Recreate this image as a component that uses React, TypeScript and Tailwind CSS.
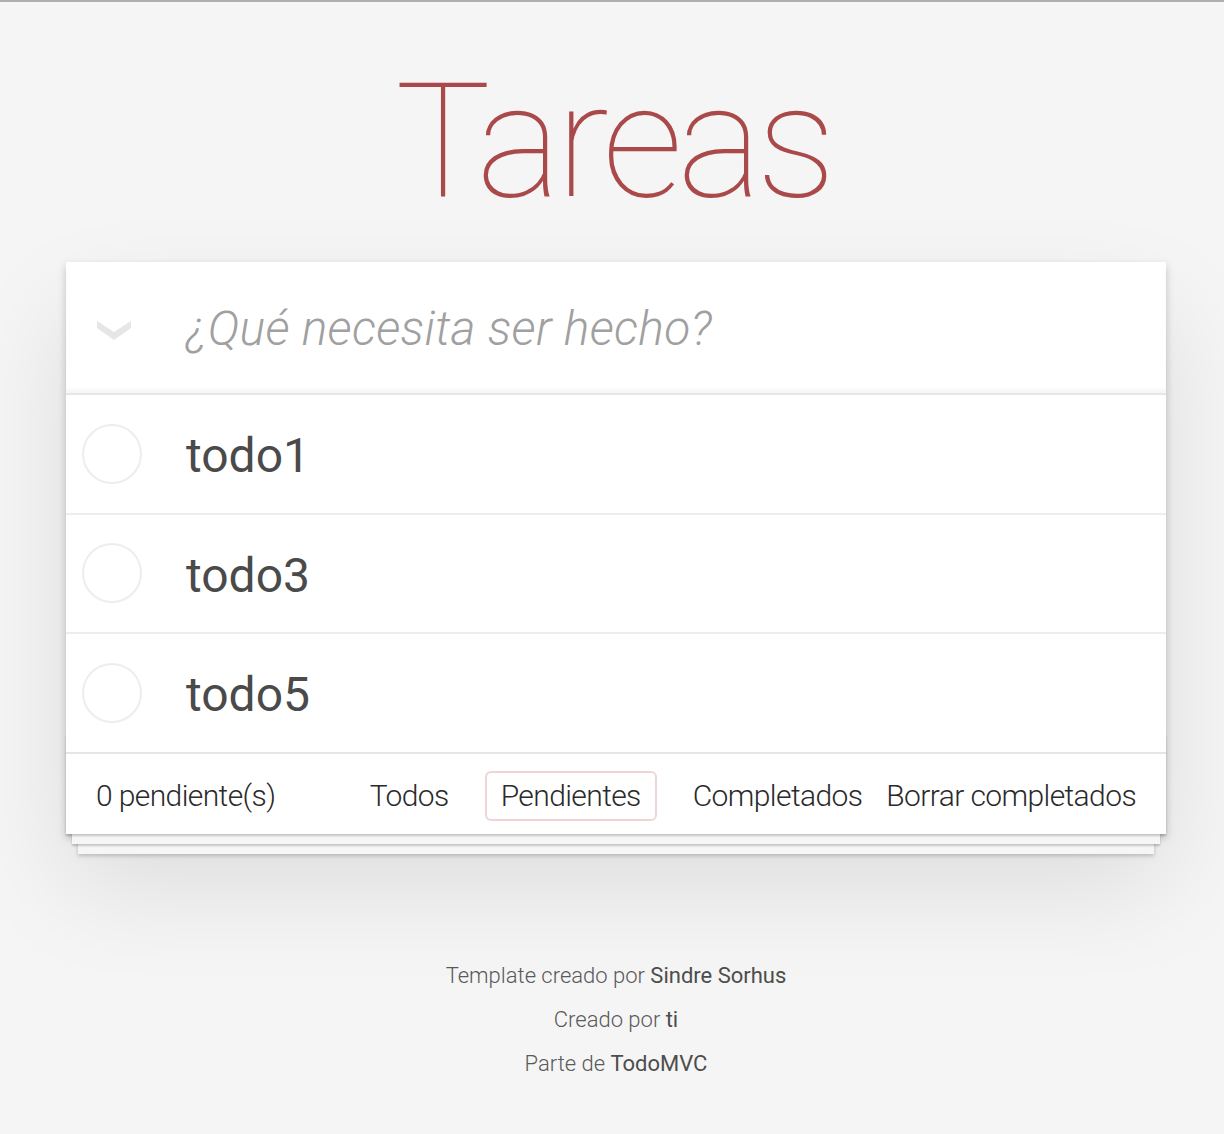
import React from "react";

const todos = ["todo1", "todo3", "todo5"];

function Circle() {
  return (
    <svg width="60" height="60" viewBox="0 0 60 60" className="block shrink-0">
      <circle cx="30" cy="30" r="29" fill="none" stroke="#ededed" strokeWidth="2" />
    </svg>
  );
}

function Chevron() {
  return (
    <svg width="34" height="20" viewBox="0 0 34 20" className="block">
      <polygon points="0,1 17,12 34,1 34,8 17,20 0,8" fill="#e6e6e6" />
    </svg>
  );
}

export default function App() {
  return (
    <div
      className="min-h-[1134px] bg-[#f5f5f5] border-t-2 border-[#b0aeb3] text-[#4d4d4d]"
      style={{ fontFamily: "'Helvetica Neue', Roboto, 'Liberation Sans', Arial, sans-serif" }}
    >
      <div className="w-[1100px] ml-[66px]">
        <h1 className="pt-[60px] pr-[6px] h-[260px] text-center text-[160px] leading-none font-thin text-[#aa4949] tracking-[-5.4px]">
          Tareas
        </h1>
        <section className="relative bg-white shadow-[0_4px_8px_0_rgba(0,0,0,0.2),0_50px_100px_0_rgba(0,0,0,0.1)]">
          <header className="h-[131px] flex items-center shadow-[inset_0_-4px_2px_rgba(0,0,0,0.03)]">
            <div className="w-[120px] pl-[31px] pt-[4px] flex items-center">
              <Chevron />
            </div>
            <div className="pt-[3px] text-[48px] italic font-light text-[#a0a0a0] leading-none tracking-[0.3px]">
              ¿Qué necesita ser hecho?
            </div>
          </header>
          <ul className="border-t-2 border-[#e6e6e6]">
            {todos.map((t, i) => (
              <li
                key={t}
                className={
                  "flex items-center " +
                  (i < todos.length - 1 ? "h-[119.6px] border-b-2 border-[#ededed]" : "h-[117.6px]")
                }
              >
                <div className="w-[120px] pl-[16px] flex items-center">
                  <Circle />
                </div>
                <span className="pt-[5px] text-[48px] leading-none text-[#4a4a4a] font-normal">{t}</span>
              </li>
            ))}
          </ul>
          <footer className="relative h-[82px] border-t-2 border-[#e6e6e6] px-[30px] pt-[5px] grid grid-cols-[1fr_auto_1fr] items-center text-[30px] font-light text-[#2a2a2a] leading-[34px] tracking-[-0.6px]">
            <div className="pointer-events-none absolute left-0 right-0 bottom-0 h-[100px] shadow-[0_2px_2px_rgba(0,0,0,0.2),0_16px_0_-6px_#f6f6f6,0_18px_2px_-6px_rgba(0,0,0,0.2),0_32px_0_-12px_#f6f6f6,0_34px_4px_-12px_rgba(0,0,0,0.2)]" />
            <span className="justify-self-start whitespace-nowrap">0 pendiente(s)</span>
            <div className="flex items-center gap-[20px]">
              <span className="px-[14px] py-[6px] border-2 border-transparent rounded-[6px]">Todos</span>
              <span className="px-[14px] py-[6px] border-2 border-[rgba(175,47,47,0.2)] rounded-[6px]">
                Pendientes
              </span>
              <span className="px-[14px] py-[6px] border-2 border-transparent rounded-[6px]">Completados</span>
            </div>
            <span className="justify-self-end whitespace-nowrap">Borrar completados</span>
          </footer>
        </section>
        <div className="mt-[131px] text-center text-[22px] leading-none font-light text-[#5a5a5a]">
          <p className="my-[22px]">
            Template creado por <span className="font-normal text-[#4d4d4d]">Sindre Sorhus</span>
          </p>
          <p className="my-[22px]">
            Creado por <span className="font-normal text-[#4d4d4d]">ti</span>
          </p>
          <p className="my-[22px]">
            Parte de <span className="font-normal text-[#4d4d4d]">TodoMVC</span>
          </p>
        </div>
      </div>
    </div>
  );
}
